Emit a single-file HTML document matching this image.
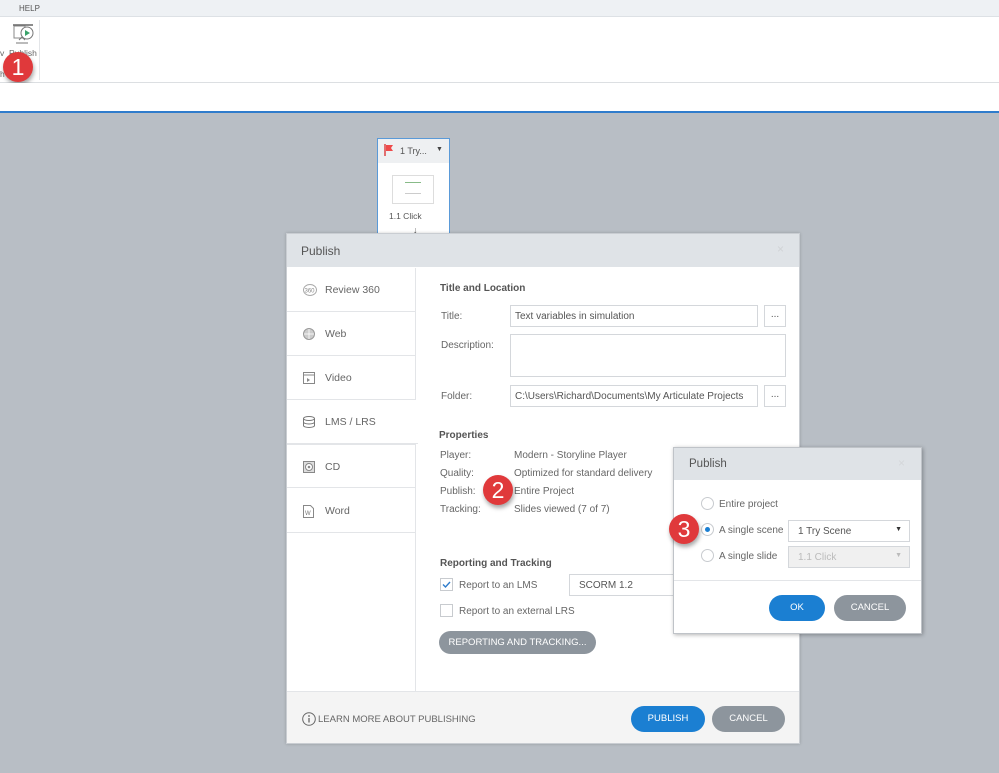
<!DOCTYPE html>
<html><head><meta charset="utf-8"><style>
*{margin:0;padding:0;box-sizing:border-box}
body{width:999px;height:773px;overflow:hidden;background:#b8bec5;font-family:"Liberation Sans",sans-serif;color:#555;font-size:10px;position:relative}
.a{position:absolute}
.lbl{font-size:10px;color:#666}
.inp{position:absolute;background:#fff;border:1px solid #d4d7db;font-size:10px;color:#555;padding:5px 4px}
.btn{position:absolute;border-radius:13px;color:#fff;font-size:9.5px;text-align:center;line-height:26px}
.badge{position:absolute;width:30px;height:30px;border-radius:50%;background:#e0393b;color:#fff;font-size:23px;text-align:center;line-height:30px;box-shadow:1px 3px 4px rgba(0,0,0,.35)}
.nav{position:absolute;left:0;width:129px;height:44px;border-bottom:1px solid #e3e5e8;font-size:10.5px;color:#666;padding-left:38px;line-height:44px}
.nav svg{position:absolute;left:16px;top:16px}
.radio{position:absolute;width:13px;height:13px;border-radius:50%;border:1px solid #c8cbcf;background:#fff}
</style></head><body>
<div class="a" style="left:0;top:0;width:999px;height:17px;background:#eef1f4;border-bottom:1px solid #dde1e5"></div>
<div class="a" style="left:19px;top:4px;font-size:8px;color:#555">HELP</div>
<div class="a" style="left:0;top:17px;width:999px;height:66px;background:#fff;border-bottom:1px solid #dcdfe2"></div>
<div class="a" style="left:39px;top:20px;width:1px;height:60px;background:#e3e5e8"></div>
<svg class="a" style="left:11px;top:23px" width="24" height="24" viewBox="0 0 24 24"><line x1="2" y1="2" x2="22" y2="2" stroke="#666" stroke-width="1.5"/><rect x="3" y="3" width="11" height="12" fill="none" stroke="#888"/><circle cx="16" cy="10" r="6" fill="#fff" stroke="#777"/><path d="M14 7l5 3-5 3z" fill="#3aa36a"/><path d="M5 20h12M8 17l3-3 3 3" stroke="#777" fill="none"/></svg>
<div class="a" style="left:0;top:48px;font-size:8.5px;color:#666">v&nbsp;&nbsp;Publish</div>
<div class="a" style="left:0;top:69px;font-size:8.5px;color:#666">h</div>
<div class="badge" style="left:3px;top:52px">1</div>
<div class="a" style="left:0;top:83px;width:999px;height:29px;background:#fff"></div>
<div class="a" style="left:0;top:111px;width:999px;height:2px;background:#2f7ccc"></div>

<div class="a" style="left:377px;top:138px;width:73px;height:100px;background:#fff;border:1px solid #5a9ad8">
  <div style="height:24px;background:#eef0f2;position:relative">
    <svg class="a" style="left:6px;top:5px" width="10" height="12"><path d="M1 0v12" stroke="#d44" stroke-width="1.5"/><path d="M2 1h7l-2 3 2 3H2z" fill="#ee4a4a"/></svg>
    <span class="a" style="left:22px;top:7px;font-size:9px;color:#555">1 Try...</span>
    <span class="a" style="left:58px;top:7px;font-size:7px;color:#444">▼</span>
  </div>
  <div class="a" style="left:14px;top:36px;width:42px;height:29px;border:1px solid #ddd;background:#fff">
    <div class="a" style="left:12px;top:6px;width:16px;height:1px;background:#8b8"></div>
    <div class="a" style="left:12px;top:17px;width:16px;height:1px;background:#ccc"></div>
  </div>
  <div class="a" style="left:11px;top:72px;font-size:8.5px;color:#555">1.1 Click</div>
  <div class="a" style="left:35px;top:86px;font-size:9px;color:#555">↓</div>
</div>

<div class="a" style="left:286px;top:233px;width:514px;height:511px;background:#fff;border:1px solid #c9cdd2;box-shadow:0 0 3px rgba(0,0,0,.2)">
  <div class="a" style="left:0;top:0;width:512px;height:33px;background:#dfe3e7"></div>
  <div class="a" style="left:14px;top:10px;font-size:12px;color:#555">Publish</div>
  <div class="a" style="left:490px;top:8px;font-size:12px;color:#d0d3d6">×</div>
  <div class="a" style="left:128px;top:34px;width:1px;height:423px;background:#e3e5e8"></div>
  <div class="nav" style="top:34px;height:44px"><svg width="14" height="12"><ellipse cx="7" cy="6" rx="6.5" ry="5.5" fill="none" stroke="#aaa"/><text x="1.5" y="8.5" font-size="6" fill="#888" font-family="Liberation Sans">360</text></svg>Review 360</div>
  <div class="nav" style="top:78px"><svg width="12" height="12"><circle cx="6" cy="6" r="5.5" fill="#ccc" stroke="#999"/><path d="M6 1v10M1 6h10" stroke="#fff" stroke-width=".8"/></svg>Web</div>
  <div class="nav" style="top:122px"><svg width="12" height="12"><rect x=".5" y=".5" width="11" height="11" fill="none" stroke="#888"/><path d="M1 3h10" stroke="#888"/><path d="M4 6l3 2-3 2z" fill="#888"/></svg>Video</div>
  <div class="nav" style="top:166px;width:131px;background:#fff"><svg width="12" height="12"><ellipse cx="6" cy="2.5" rx="5.5" ry="2" fill="none" stroke="#777"/><path d="M.5 2.5v7c0 1.2 2.5 2 5.5 2s5.5-.8 5.5-2v-7M.5 6c0 1.2 2.5 2 5.5 2s5.5-.8 5.5-2" fill="none" stroke="#777"/></svg>LMS / LRS</div>
  <div class="nav" style="top:210px;border-top:1px solid #e3e5e8"><svg width="12" height="12"><rect x=".5" y=".5" width="11" height="11" fill="#ddd" stroke="#888"/><circle cx="6" cy="6" r="3.5" fill="#fff" stroke="#888"/><circle cx="6" cy="6" r="1.3" fill="#888"/></svg>CD</div>
  <div class="nav" style="top:255px"><svg width="11" height="13"><path d="M.5.5h7l3 3v9h-10z" fill="#fff" stroke="#888"/><text x="2" y="10" font-size="6" fill="#777" font-family="Liberation Sans">W</text></svg>Word</div>

  <div class="a" style="left:153px;top:49px;font-size:10px;font-weight:bold;color:#555">Title and Location</div>
  <div class="a lbl" style="left:154px;top:77px">Title:</div>
  <div class="inp" style="left:223px;top:71px;width:248px;height:22px">Text variables in simulation</div>
  <div class="inp" style="left:477px;top:71px;width:22px;height:22px;text-align:center;padding:3px 0">...</div>
  <div class="a lbl" style="left:154px;top:106px">Description:</div>
  <div class="inp" style="left:223px;top:100px;width:276px;height:43px"></div>
  <div class="a lbl" style="left:154px;top:157px">Folder:</div>
  <div class="inp" style="left:223px;top:151px;width:248px;height:22px">C:\Users\Richard\Documents\My Articulate Projects</div>
  <div class="inp" style="left:477px;top:151px;width:22px;height:22px;text-align:center;padding:3px 0">...</div>

  <div class="a" style="left:152px;top:196px;font-size:10px;font-weight:bold;color:#555">Properties</div>
  <div class="a lbl" style="left:153px;top:216px">Player:</div><div class="a lbl" style="left:227px;top:216px">Modern - Storyline Player</div>
  <div class="a lbl" style="left:153px;top:234px">Quality:</div><div class="a lbl" style="left:227px;top:234px">Optimized for standard delivery</div>
  <div class="a lbl" style="left:153px;top:252px">Publish:</div><div class="a lbl" style="left:227px;top:252px">Entire Project</div>
  <div class="a lbl" style="left:153px;top:270px">Tracking:</div><div class="a lbl" style="left:227px;top:270px">Slides viewed (7 of 7)</div>

  <div class="a" style="left:153px;top:324px;font-size:10px;font-weight:bold;color:#555">Reporting and Tracking</div>
  <div class="a" style="left:153px;top:344px;width:13px;height:13px;border:1px solid #c8cbcf;background:#fff"><svg width="11" height="11" style="position:absolute;left:0;top:0"><path d="M2 5.5l2.5 2.5 4.5-5" stroke="#2f7ccc" stroke-width="1.4" fill="none"/></svg></div>
  <div class="a lbl" style="left:172px;top:346px">Report to an LMS</div>
  <div class="inp" style="left:282px;top:340px;width:110px;height:22px;padding-left:9px">SCORM 1.2</div>
  <div class="a" style="left:153px;top:370px;width:13px;height:13px;border:1px solid #c8cbcf;background:#fff"></div>
  <div class="a lbl" style="left:172px;top:372px">Report to an external LRS</div>
  <div class="btn" style="left:152px;top:397px;width:157px;height:23px;line-height:23px;background:#8d959d">REPORTING AND TRACKING...</div>

  <div class="a" style="left:0;top:457px;width:512px;height:52px;background:#f4f4f4;border-top:1px solid #e3e5e8"></div>
  <svg class="a" style="left:15px;top:478px" width="14" height="14"><circle cx="7" cy="7" r="6.3" fill="none" stroke="#666"/><path d="M7 6v4.5" stroke="#666" stroke-width="1.3"/><circle cx="7" cy="4" r=".9" fill="#666"/></svg>
  <div class="a" style="left:31px;top:480px;font-size:9.5px;color:#666">LEARN MORE ABOUT PUBLISHING</div>
  <div class="btn" style="left:344px;top:472px;width:74px;height:26px;background:#1b7fd2">PUBLISH</div>
  <div class="btn" style="left:425px;top:472px;width:73px;height:26px;background:#8d959d">CANCEL</div>
</div>
<div class="badge" style="left:483px;top:475px">2</div>

<div class="a" style="left:673px;top:447px;width:249px;height:187px;background:#fff;border:1px solid #bfc3c8;box-shadow:1px 1px 4px rgba(0,0,0,.3)">
  <div class="a" style="left:0;top:0;width:247px;height:32px;background:#dfe3e7"></div>
  <div class="a" style="left:15px;top:10px;font-size:11.5px;color:#555">Publish</div>
  <div class="a" style="left:224px;top:8px;font-size:12px;color:#d4d7da">×</div>
  <div class="radio" style="left:27px;top:49px"></div>
  <div class="a lbl" style="left:45px;top:51px">Entire project</div>
  <div class="radio" style="left:27px;top:75px"><div class="a" style="left:3px;top:3px;width:5px;height:5px;border-radius:50%;background:#1b7fd2"></div></div>
  <div class="a lbl" style="left:45px;top:77px">A single scene</div>
  <div class="inp" style="left:114px;top:72px;width:122px;height:22px;padding-left:9px">1 Try Scene<span style="position:absolute;right:7px;top:5px;font-size:7px;color:#333">▼</span></div>
  <div class="radio" style="left:27px;top:101px"></div>
  <div class="a lbl" style="left:45px;top:103px">A single slide</div>
  <div class="inp" style="left:114px;top:98px;width:122px;height:22px;padding-left:9px;background:#f0f0f0;color:#bbb">1.1 Click<span style="position:absolute;right:7px;top:5px;font-size:7px;color:#bbb">▼</span></div>
  <div class="a" style="left:0;top:132px;width:247px;height:1px;background:#e3e5e8"></div>
  <div class="btn" style="left:95px;top:147px;width:56px;height:26px;background:#1b7fd2">OK</div>
  <div class="btn" style="left:160px;top:147px;width:72px;height:26px;background:#8d959d">CANCEL</div>
</div>
<div class="badge" style="left:669px;top:514px">3</div>
</body></html>
